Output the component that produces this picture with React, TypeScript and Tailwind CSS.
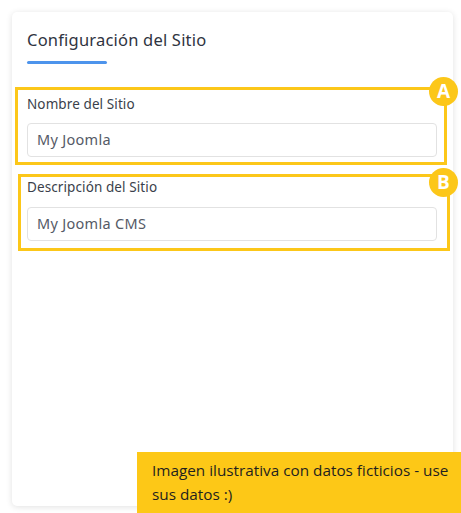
import React from "react";

function Badge({ letter, top }: { letter: string; top: string }) {
  return (
    <div
      className={`absolute left-[429px] ${top} w-[29px] h-[29px] rounded-full bg-[#fcc719] flex items-center justify-center text-white text-[19px] font-bold leading-none`}
      style={{ fontFamily: '"Open Sans", "Liberation Sans", sans-serif' }}
    >
      {letter}
    </div>
  );
}

export default function App() {
  const poppins = { fontFamily: '"Noto Sans", "Open Sans", sans-serif' };
  return (
    <div className="relative w-[461px] h-[513px] bg-white overflow-hidden">
      <div className="pt-[12px] pl-[12px]">
        <div
          className="w-[441px] h-[494px] rounded-[5px] bg-white shadow-[0_1px_6px_rgba(0,0,0,0.12)] pt-[16px]"
          style={poppins}
        >
          <div className="pl-[15px]">
            <div className="text-[16.5px] leading-[24px] text-[#2f3441] tracking-[0.2px]">
              Configuración del Sitio
            </div>
            <div className="mt-[9px] h-[3px] w-[80px] bg-[#4d94ec] rounded-full" />
          </div>

          <div className="mt-[23px] ml-[3px] w-[432px] h-[78px] border-[3px] border-[#fcc719] pl-[9px] pr-[7px] pt-[4px]">
            <div className="text-[13.5px] leading-[20px] text-[#3a3f4b] tracking-[0.1px]">Nombre del Sitio</div>
            <div className="mt-[9px] h-[34px] rounded-[4px] border border-[#e2e2e2] bg-white flex items-center pl-[9px] text-[14.5px] tracking-[0.3px] text-[#555a66]">
              My Joomla
            </div>
          </div>

          <div className="mt-[9px] ml-[6px] w-[432px] h-[77px] border-[3px] border-[#fcc719] pl-[6px] pr-[10px] pt-[0px]">
            <div className="text-[13.5px] leading-[20px] text-[#3a3f4b] tracking-[0.1px]">Descripción del Sitio</div>
            <div className="mt-[10px] h-[34px] rounded-[4px] border border-[#e2e2e2] bg-white flex items-center pl-[9px] text-[14.5px] tracking-[0.3px] text-[#555a66]">
              My Joomla CMS
            </div>
          </div>
        </div>
      </div>

      <Badge letter="A" top="top-[77px]" />
      <Badge letter="B" top="top-[168px]" />

      <div
        className="absolute left-[137px] top-[452px] w-[324px] h-[61px] bg-[#fdc817] pl-[15px] pr-[12px] pt-[6px] text-[15.3px] leading-[24px] text-[#1f1f1f]"
        style={{ fontFamily: '"Open Sans", "Noto Sans", sans-serif' }}
      >
        Imagen ilustrativa con datos ficticios - use sus datos :)
      </div>
    </div>
  );
}
